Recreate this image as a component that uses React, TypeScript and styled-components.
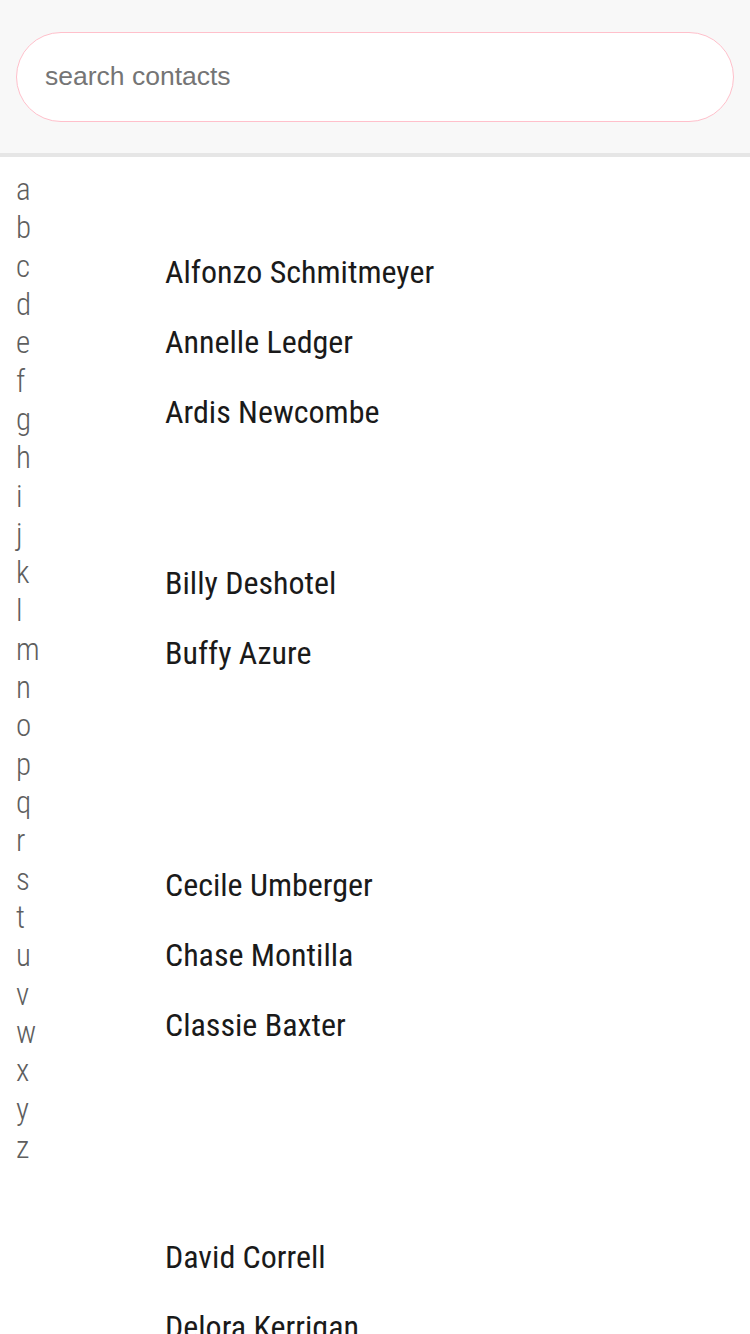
import React from "react";
import styled, { createGlobalStyle } from "styled-components";

const Global = createGlobalStyle`
  html, body { margin: 0; padding: 0; background: #ffffff; }
  body { font-family: "Roboto Condensed", Roboto, "Liberation Sans", sans-serif; font-stretch: condensed; }
  * { box-sizing: border-box; }
`;

const Header = styled.header`
  background: #f8f8f8;
  height: 157px;
  padding: 32px 16px 0 16px;
  border-bottom: 4px solid #e6e6e6;
`;

const Search = styled.input`
  display: block;
  width: 100%;
  height: 90px;
  border: 1.5px solid #ffc0cb;
  border-radius: 45px;
  background: #ffffff;
  padding: 0 0 2px 28px;
  font-family: "Liberation Sans", Arial, sans-serif;
  font-size: 26.5px;
  color: #333;
  outline: none;
  &::placeholder { color: #757575; }
`;

const Body = styled.div`
  display: flex;
  align-items: flex-start;
`;

const Index = styled.ul`
  list-style: none;
  margin: 0;
  padding: 14px 0 0 16px;
  width: 165px;
  flex: none;
`;

const IndexLetter = styled.li`
  font-family: "Roboto Condensed", Roboto, sans-serif;
  font-stretch: condensed;
  font-weight: 300;
  font-size: 31px;
  line-height: 38.32px;
  height: 38.32px;
  color: #5e5e5e;
`;

const List = styled.div`
  flex: 1;
  display: flex;
  flex-direction: column;
`;

const Section = styled.section<{ $top: number }>`
  padding-top: ${(p) => p.$top}px;
`;

const Name = styled.div`
  font-family: "Roboto Condensed", Roboto, sans-serif;
  font-stretch: condensed;
  font-weight: 400;
  font-size: 32px;
  line-height: 70px;
  height: 70px;
  color: #1a1a1a;
`;

const letters = "abcdefghijklmnopqrstuvwxyz".split("");

const sections: { top: number; names: string[] }[] = [
  { top: 80, names: ["Alfonzo Schmitmeyer", "Annelle Ledger", "Ardis Newcombe"] },
  { top: 101, names: ["Billy Deshotel", "Buffy Azure"] },
  { top: 162, names: ["Cecile Umberger", "Chase Montilla", "Classie Baxter"] },
  { top: 162, names: ["David Correll", "Delora Kerrigan"] },
];

export default function App() {
  return (
    <>
      <Global />
      <Header>
        <Search placeholder="search contacts" />
      </Header>
      <Body>
        <Index>
          {letters.map((l) => (
            <IndexLetter key={l}>{l}</IndexLetter>
          ))}
        </Index>
        <List>
          {sections.map((s, i) => (
            <Section key={i} $top={s.top}>
              {s.names.map((n) => (
                <Name key={n}>{n}</Name>
              ))}
            </Section>
          ))}
        </List>
      </Body>
    </>
  );
}
